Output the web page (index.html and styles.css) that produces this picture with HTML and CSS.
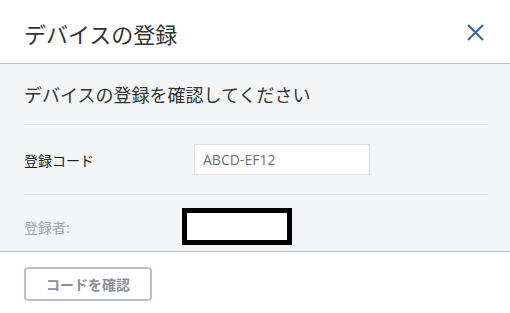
FILE: index.html
```html
<!DOCTYPE html>
<html lang="ja">
<head>
	<meta charset="UTF-8">
	<title>デバイスの登録</title>
	<link rel="stylesheet" href="styles.css">
</head>
<body>
	<div class="dialog">
		<div class="dialog-header">
			<h1 class="dialog-title">デバイスの登録</h1>
			<a href="#" class="dialog-close" title="閉じる">
				<svg width="17" height="17" viewBox="0 0 17 17">
					<path d="M1 1 L16 16 M16 1 L1 16" stroke="#3d68a8" stroke-width="2.2" fill="none"/>
				</svg>
			</a>
		</div>
		<div class="dialog-body">
			<p class="subtitle">デバイスの登録を確認してください</p>
			<div class="row row-code">
				<span class="label">登録コード</span>
				<input type="text" class="code-input" value="ABCD-EF12" readonly>
			</div>
			<div class="row row-owner">
				<span class="label label-muted">登録者:</span>
				<span class="redacted"></span>
			</div>
		</div>
		<div class="dialog-footer">
			<button class="btn" disabled>コードを確認</button>
		</div>
	</div>
</body>
</html>
```

FILE: styles.css
```css
body,h1,p,div{
	margin: 0;
	padding: 0;
}
body{
	background: #fff;
	font-family: "Noto Sans CJK JP", "Open Sans", sans-serif;
	color: #333;
}
.dialog{
	width: 510px;
	height: 313px;
}
.dialog-header{
	display: flex;
	align-items: center;
	justify-content: space-between;
	height: 64px;
	padding: 0 26px 0 24px;
	border-bottom: 1px solid #abc5e2;
	box-sizing: border-box;
}
.dialog-title{
	font-size: 22px;
	font-weight: normal;
	color: #333;
	line-height: 1;
	margin-top: 2px;
}
.dialog-close{
	display: flex;
	margin-top: 2px;
}
.dialog-body{
	background: #f4f5f7;
	padding: 0 22px 0 24px;
	height: 187px;
	border-bottom: 1px solid #b9c4d0;
}
.subtitle{
	display: flex;
	align-items: center;
	height: 60px;
	font-size: 18px;
	color: #333;
	border-bottom: 1px solid #dfe1e5;
}
.row{
	display: flex;
	box-sizing: border-box;
}
.row-code{
	height: 70px;
	align-items: center;
	border-bottom: 1px solid #dfe1e5;
}
.row-owner{
	padding-top: 13px;
	align-items: center;
}
.label{
	width: 158px;
	font-size: 14px;
	color: #222;
}
.label-muted{
	color: #a2a6ab;
}
.code-input{
	width: 176px;
	height: 31px;
	margin-left: 12px;
	box-sizing: border-box;
	border: 1px solid #dde1e6;
	background: #fff;
	padding: 0 8px;
	font-family: "Open Sans", sans-serif;
	font-size: 14px;
	color: #68707c;
	outline: none;
}
.redacted{
	width: 110px;
	height: 37px;
	box-sizing: border-box;
	border: 5px solid #000;
	background: #fff;
}
.dialog-footer{
	padding: 15px 24px 0;
}
.btn{
	width: 128px;
	height: 34px;
	border: 2px solid #b8c0ca;
	border-radius: 4px;
	background: #fff;
	font-family: "Noto Sans CJK JP", sans-serif;
	font-size: 14px;
	font-weight: bold;
	color: #8b9098;
}
```
